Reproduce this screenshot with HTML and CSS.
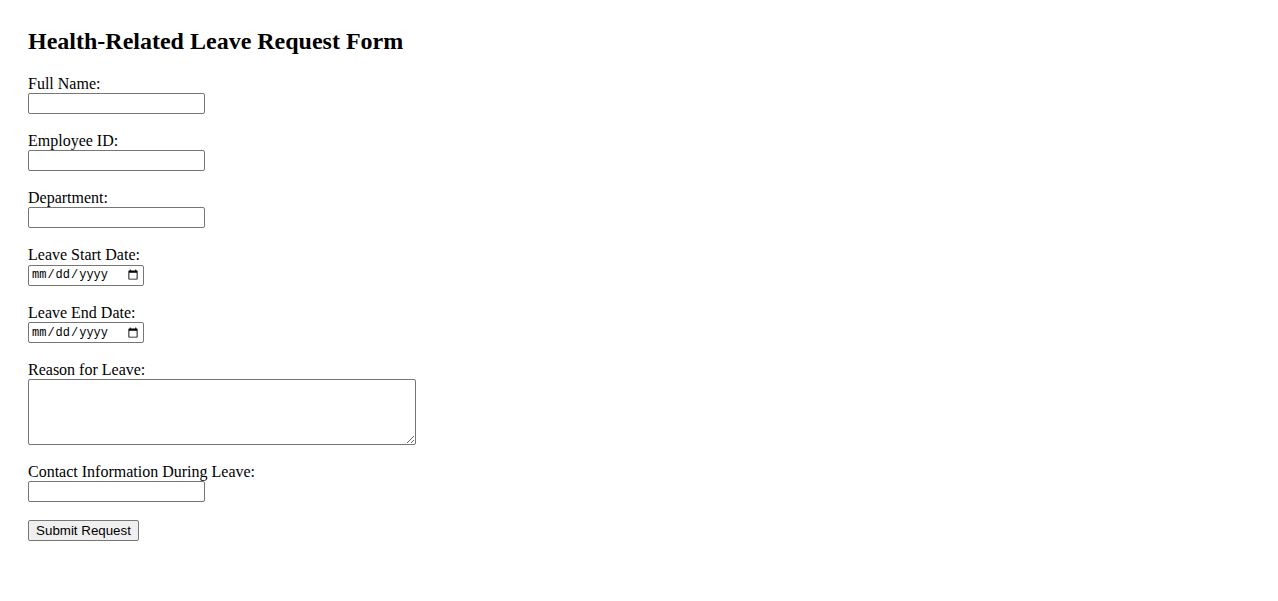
FILE: index.html
```html
<!DOCTYPE html>
<html lang="en">
<head>
<meta charset="utf-8">
<title>Health-Related Leave Request Form</title>
<link rel="stylesheet" href="styles.css">
</head>
<body>
<h2 class="title">Health-Related Leave Request Form</h2>
<form class="form">
  <label for="fullName">Full Name:</label><br>
  <input class="field" type="text" id="fullName" name="fullName"><br><br>
  <label for="employeeId">Employee ID:</label><br>
  <input class="field" type="text" id="employeeId" name="employeeId"><br><br>
  <label for="department">Department:</label><br>
  <input class="field" type="text" id="department" name="department"><br><br>
  <label for="startDate">Leave Start Date:</label><br>
  <input class="date" type="date" id="startDate" name="startDate"><br><br>
  <label for="endDate">Leave End Date:</label><br>
  <input class="date" type="date" id="endDate" name="endDate"><br><br>
  <label for="reason">Reason for Leave:</label><br>
  <textarea class="area" id="reason" name="reason"></textarea><br><br>
  <label for="contact">Contact Information During Leave:</label><br>
  <input class="field" type="text" id="contact" name="contact"><br><br>
  <button class="submit" type="submit">Submit Request</button>
</form>
</body>
</html>
```

FILE: styles.css
```css
body {
  margin: 8px;
  padding: 20px;
  font-family: "Liberation Serif", "Times New Roman", serif;
  font-size: 16px;
  color: #000;
  background: #fff;
}
.title {
  font-size: 24px;
  font-weight: bold;
  margin: 0 0 20px;
}
.form {
  margin: 0;
}
.field, .date, .area, .submit {
  box-sizing: border-box;
  margin: 0;
  font-family: "Liberation Sans", Arial, sans-serif;
  font-size: 13.33px;
  color: #000;
}
.field {
  width: 177px;
  height: 21px;
  border: 1px solid #767676;
  border-radius: 2px;
  padding: 1px 2px;
  background: #fff;
}
.date {
  width: 116px;
  height: 21px;
  border: 1px solid #767676;
  border-radius: 2px;
  padding: 1px 2px;
  background: #fff;
  font-family: "Liberation Mono", "DejaVu Sans Mono", monospace;
  font-size: 12px;
}
.area {
  width: 388px;
  height: 66px;
  border: 1px solid #767676;
  border-radius: 2px;
  padding: 2px;
  vertical-align: bottom;
}
.submit {
  width: 111px;
  height: 21px;
  border: 1px solid #767676;
  border-radius: 2px;
  background: #efefef;
  padding: 1px 6px;
}
```
